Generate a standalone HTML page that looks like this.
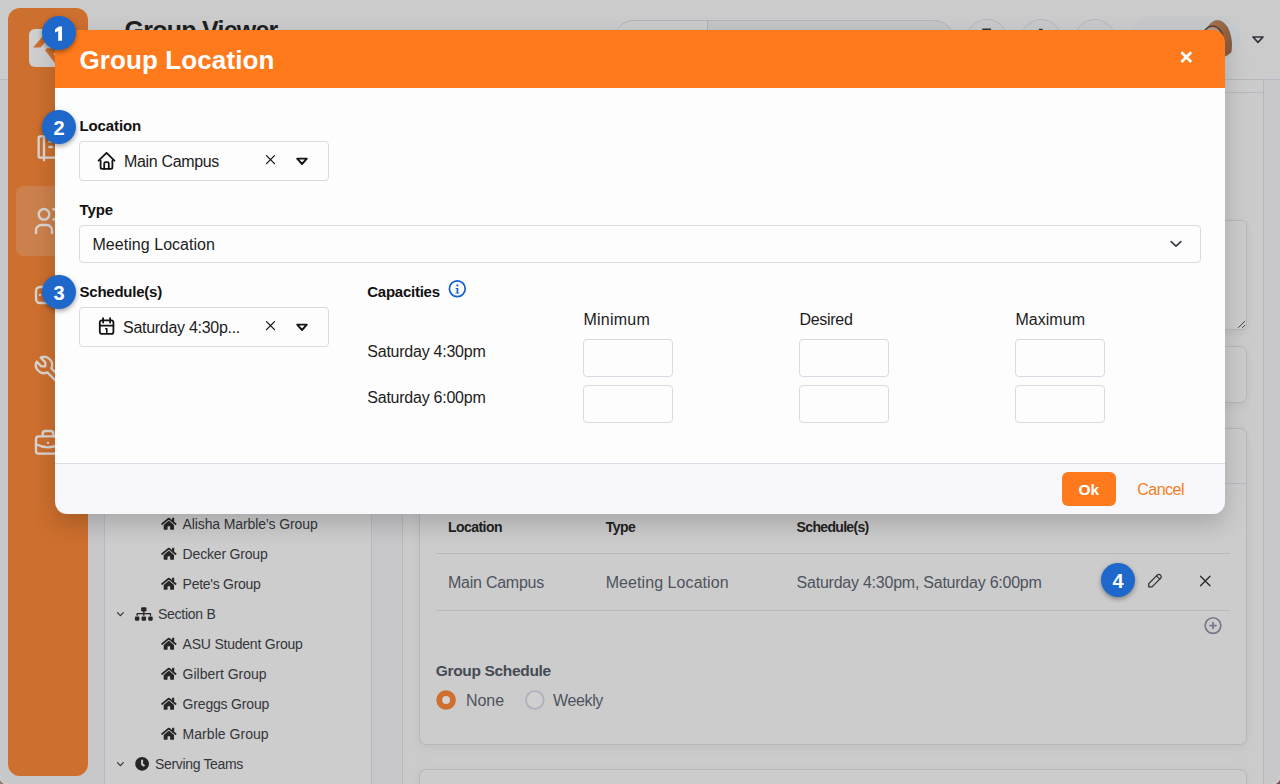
<!DOCTYPE html>
<html lang="en">
<head>
<meta charset="utf-8">
<title>Group Viewer - Group Location</title>
<style>
*{box-sizing:border-box;margin:0;padding:0}
html,body{width:1280px;height:784px;overflow:hidden}
body{position:relative;background:#c8c8cb;font-family:"Liberation Sans",sans-serif;}
.a{position:absolute}
.t{position:absolute;white-space:pre;font-family:"Liberation Sans",sans-serif}
svg{position:absolute;overflow:visible}
/* ---------- dimmed page ---------- */
#topbar{left:0;top:0;width:1280px;height:80px;background:#cbcbcb;border-bottom:1px solid #b7b8c3}
#sidebar{left:8px;top:8px;width:80px;height:768px;border-radius:12px;background:#cd6f2e}
#logo{left:29px;top:29px;width:38px;height:38px;border-radius:6px;background:#cfcfcf}
#active{left:16px;top:186px;width:64px;height:70px;border-radius:7px;background:rgba(200,200,200,.2)}
#search{left:614px;top:20px;width:340px;height:39px;border-radius:20px;border:1px solid #b3b4bf;background:linear-gradient(90deg,#cbcbcb 0 93px,#c5c5c7 93px)}
#searchdiv{left:707px;top:20px;width:1px;height:39px;background:#adaeba}
.cbtn{width:42px;height:42px;border-radius:50%;border:1px solid #b4b5c0;top:19px;background:#c9c9cb}
#pill{left:1131px;top:16px;width:109px;height:45px;border-radius:23px;background:#c6c8cb}
#avatar{left:1198px;top:19px;width:39px;height:39px;border-radius:50%;overflow:hidden;background:#c3cbd0}
#hair{left:4.5px;top:1px;width:29px;height:50px;border-radius:50%;background:linear-gradient(100deg,#a9744f 0%,#9c6a47 50%,#7e553b 100%)}
#face{left:4px;top:7.5px;width:21px;height:30px;border-radius:50%;background:#b8978a;box-shadow:0 0 0 1.6px #5a3c2c}
.panel{background:#cbcbcb;border:1px solid #b6b6bf}
#tree{left:104px;top:100px;width:268px;height:700px;background:#cdcdcd;border:1px solid #b8b9c3}
#main{left:402px;top:79px;width:862px;height:720px}
#hdrline{left:403px;top:92px;width:860px;height:1px;background:#b7b8c2}
.card{background:#cccccc;border:1px solid #b7b7c0;border-radius:7px;box-shadow:0 3px 9px rgba(0,0,0,.055)}
.hl{height:1px;background:#b7b8c2}
/* ---------- modal ---------- */
#modal{left:55px;top:30px;width:1170px;height:484px;border-radius:12px;
 box-shadow:0 10px 25px rgba(0,0,0,.18)}
#mhead{left:0;top:0;width:1170px;height:58px;background:#ff7a1c;border-radius:12px 12px 0 0}
#mbody{left:0;top:58px;width:1170px;height:375px;background:#fdfdfd}
#mfoot{left:0;top:433px;width:1170px;height:51px;background:#f8f8fc;border-top:1px solid #dddde8;border-radius:0 0 12px 12px}
.box{border:1px solid #dadae4;border-radius:4px;background:#fdfdfd}
#ok{left:1062px;top:472px;width:54px;height:34px;border-radius:6px;background:#ff7a1c}
.badge{width:34px;height:34px;border-radius:50%;background:#1e68cb;box-shadow:0 2px 5px rgba(0,0,0,.38);
 color:#fff;font-weight:700;font-size:20px;line-height:36.5px;text-align:center}
</style>
</head>
<body>
<!-- ================= dimmed page ================= -->
<div class="a" id="topbar"></div>
<div class="a" id="search"></div><div class="a" id="searchdiv"></div>
<div class="a cbtn" style="left:966px"></div>
<div class="a cbtn" style="left:1020px"></div>
<div class="a cbtn" style="left:1074px"></div>
<div class="a" id="pill"></div>
<div class="a" id="avatar"><div class="a" id="hair"></div><div class="a" id="face"></div></div>
<svg style="left:1250px;top:33px" width="16" height="12" viewBox="0 0 16 12"><polygon points="3,4 13,4 8,9.3" fill="none" stroke="#30353c" stroke-width="1.7" stroke-linejoin="round"/></svg>

<div class="a" id="sidebar"></div>
<div class="a" id="logo"></div>
<svg style="left:29px;top:29px" width="38" height="38" viewBox="0 0 38 38"><g fill="#cd6f2e"><polygon points="4.1,18.6 11.5,18.6 21.6,6.7 14.2,6.7"/><polygon points="16.1,21.3 17.8,19.2 27,19.2 27,35.5"/></g><polygon points="24.2,24.8 26.2,23.4 26.2,26.8" fill="#cfcfcf"/></svg>
<div class="a" id="active"></div>
<svg style="left:0;top:0" width="1" height="1"><g transform="translate(32.00,131.00) scale(1.3333)" fill="none" stroke="#d9d5d3" stroke-width="1.75" stroke-linecap="round" stroke-linejoin="round"><path d="M6 4h11a2 2 0 0 1 2 2v12a2 2 0 0 1 -2 2h-11a1 1 0 0 1 -1 -1v-14a1 1 0 0 1 1 -1"/><path d="M9 4v18"/><path d="M13 8h2"/><path d="M13 12h2"/></g></svg>
<svg style="left:0;top:0" width="1" height="1"><g transform="translate(32.00,205.00) scale(1.3333)" fill="none" stroke="#d9d5d3" stroke-width="1.75" stroke-linecap="round" stroke-linejoin="round"><path d="M9 7m-4 0a4 4 0 1 0 8 0a4 4 0 1 0 -8 0"/><path d="M3 21v-2a4 4 0 0 1 4 -4h4a4 4 0 0 1 4 4v2"/><path d="M16 3.13a4 4 0 0 1 0 7.75"/><path d="M21 21v-2a4 4 0 0 0 -3 -3.85"/></g></svg>
<svg style="left:0;top:0" width="1" height="1"><g transform="translate(32.00,279.00) scale(1.3333)" fill="none" stroke="#d9d5d3" stroke-width="1.75" stroke-linecap="round" stroke-linejoin="round"><path d="M3 9a3 3 0 0 1 3 -3h12a3 3 0 0 1 3 3v6a3 3 0 0 1 -3 3h-12a3 3 0 0 1 -3 -3z"/><path d="M6 12h.01"/><path d="M18 12h.01"/><path d="M12 12m-3 0a3 3 0 1 0 6 0a3 3 0 1 0 -6 0"/></g></svg>
<svg style="left:0;top:0" width="1" height="1"><g transform="translate(32.00,353.00) scale(1.3333)" fill="none" stroke="#d9d5d3" stroke-width="1.75" stroke-linecap="round" stroke-linejoin="round"><path d="M7 10h3v-3l-3.5 -3.5a6 6 0 0 1 8 8l6 6a2 2 0 0 1 -3 3l-6 -6a6 6 0 0 1 -8 -8l3.500 3.500"/></g></svg>
<svg style="left:0;top:0" width="1" height="1"><g transform="translate(32.00,427.00) scale(1.3333)" fill="none" stroke="#d9d5d3" stroke-width="1.75" stroke-linecap="round" stroke-linejoin="round"><path d="M3 9a2 2 0 0 1 2 -2h14a2 2 0 0 1 2 2v9a2 2 0 0 1 -2 2h-14a2 2 0 0 1 -2 -2z"/><path d="M8 7v-2a2 2 0 0 1 2 -2h4a2 2 0 0 1 2 2v2"/><path d="M12 12v.01"/><path d="M3 13a20 20 0 0 0 18 0"/></g></svg>

<div class="a" id="tree"></div>
<div class="a panel" id="main"></div>
<div class="a" id="hdrline"></div>
<div class="a card" style="left:419px;top:220px;width:828px;height:110px;border-radius:5px"></div>
<div class="a card" style="left:419px;top:346px;width:828px;height:57px"></div>
<div class="a card" style="left:419px;top:428px;width:828px;height:317px"></div>
<div class="a hl" style="left:420px;top:483px;width:826px"></div>
<div class="a card" style="left:419px;top:769px;width:828px;height:60px"></div>
<div class="a hl" style="left:436px;top:553px;width:794px"></div>
<div class="a hl" style="left:436px;top:610px;width:794px"></div>
<svg style="left:0;top:0" width="1" height="1"><path transform="translate(161.10,516.84) scale(0.02691)" d="M280.37 148.26L96 300.11V464a16 16 0 0 0 16 16l112.06-.29a16 16 0 0 0 15.92-16V368a16 16 0 0 1 16-16h64a16 16 0 0 1 16 16v95.64a16 16 0 0 0 16 16.05L464 480a16 16 0 0 0 16-16V300L295.67 148.26a12.19 12.19 0 0 0-15.3 0zM571.6 251.47L488 182.56V44.05a12 12 0 0 0-12-12h-56a12 12 0 0 0-12 12v72.61L318.47 43a48 48 0 0 0-61 0L4.34 251.47a12 12 0 0 0-1.6 16.9l25.5 31A12 12 0 0 0 45.15 301l235.22-193.74a12.19 12.19 0 0 1 15.3 0L530.9 301a12 12 0 0 0 16.9-1.6l25.5-31a12 12 0 0 0-1.7-16.93z" fill="#262626"/></svg>
<svg style="left:0;top:0" width="1" height="1"><path transform="translate(161.10,546.84) scale(0.02691)" d="M280.37 148.26L96 300.11V464a16 16 0 0 0 16 16l112.06-.29a16 16 0 0 0 15.92-16V368a16 16 0 0 1 16-16h64a16 16 0 0 1 16 16v95.64a16 16 0 0 0 16 16.05L464 480a16 16 0 0 0 16-16V300L295.67 148.26a12.19 12.19 0 0 0-15.3 0zM571.6 251.47L488 182.56V44.05a12 12 0 0 0-12-12h-56a12 12 0 0 0-12 12v72.61L318.47 43a48 48 0 0 0-61 0L4.34 251.47a12 12 0 0 0-1.6 16.9l25.5 31A12 12 0 0 0 45.15 301l235.22-193.74a12.19 12.19 0 0 1 15.3 0L530.9 301a12 12 0 0 0 16.9-1.6l25.5-31a12 12 0 0 0-1.7-16.93z" fill="#262626"/></svg>
<svg style="left:0;top:0" width="1" height="1"><path transform="translate(161.10,576.84) scale(0.02691)" d="M280.37 148.26L96 300.11V464a16 16 0 0 0 16 16l112.06-.29a16 16 0 0 0 15.92-16V368a16 16 0 0 1 16-16h64a16 16 0 0 1 16 16v95.64a16 16 0 0 0 16 16.05L464 480a16 16 0 0 0 16-16V300L295.67 148.26a12.19 12.19 0 0 0-15.3 0zM571.6 251.47L488 182.56V44.05a12 12 0 0 0-12-12h-56a12 12 0 0 0-12 12v72.61L318.47 43a48 48 0 0 0-61 0L4.34 251.47a12 12 0 0 0-1.6 16.9l25.5 31A12 12 0 0 0 45.15 301l235.22-193.74a12.19 12.19 0 0 1 15.3 0L530.9 301a12 12 0 0 0 16.9-1.6l25.5-31a12 12 0 0 0-1.7-16.93z" fill="#262626"/></svg>
<svg style="left:0;top:0" width="1" height="1"><path transform="translate(161.10,636.84) scale(0.02691)" d="M280.37 148.26L96 300.11V464a16 16 0 0 0 16 16l112.06-.29a16 16 0 0 0 15.92-16V368a16 16 0 0 1 16-16h64a16 16 0 0 1 16 16v95.64a16 16 0 0 0 16 16.05L464 480a16 16 0 0 0 16-16V300L295.67 148.26a12.19 12.19 0 0 0-15.3 0zM571.6 251.47L488 182.56V44.05a12 12 0 0 0-12-12h-56a12 12 0 0 0-12 12v72.61L318.47 43a48 48 0 0 0-61 0L4.34 251.47a12 12 0 0 0-1.6 16.9l25.5 31A12 12 0 0 0 45.15 301l235.22-193.74a12.19 12.19 0 0 1 15.3 0L530.9 301a12 12 0 0 0 16.9-1.6l25.5-31a12 12 0 0 0-1.7-16.93z" fill="#262626"/></svg>
<svg style="left:0;top:0" width="1" height="1"><path transform="translate(161.10,666.84) scale(0.02691)" d="M280.37 148.26L96 300.11V464a16 16 0 0 0 16 16l112.06-.29a16 16 0 0 0 15.92-16V368a16 16 0 0 1 16-16h64a16 16 0 0 1 16 16v95.64a16 16 0 0 0 16 16.05L464 480a16 16 0 0 0 16-16V300L295.67 148.26a12.19 12.19 0 0 0-15.3 0zM571.6 251.47L488 182.56V44.05a12 12 0 0 0-12-12h-56a12 12 0 0 0-12 12v72.61L318.47 43a48 48 0 0 0-61 0L4.34 251.47a12 12 0 0 0-1.6 16.9l25.5 31A12 12 0 0 0 45.15 301l235.22-193.74a12.19 12.19 0 0 1 15.3 0L530.9 301a12 12 0 0 0 16.9-1.6l25.5-31a12 12 0 0 0-1.7-16.93z" fill="#262626"/></svg>
<svg style="left:0;top:0" width="1" height="1"><path transform="translate(161.10,696.84) scale(0.02691)" d="M280.37 148.26L96 300.11V464a16 16 0 0 0 16 16l112.06-.29a16 16 0 0 0 15.92-16V368a16 16 0 0 1 16-16h64a16 16 0 0 1 16 16v95.64a16 16 0 0 0 16 16.05L464 480a16 16 0 0 0 16-16V300L295.67 148.26a12.19 12.19 0 0 0-15.3 0zM571.6 251.47L488 182.56V44.05a12 12 0 0 0-12-12h-56a12 12 0 0 0-12 12v72.61L318.47 43a48 48 0 0 0-61 0L4.34 251.47a12 12 0 0 0-1.6 16.9l25.5 31A12 12 0 0 0 45.15 301l235.22-193.74a12.19 12.19 0 0 1 15.3 0L530.9 301a12 12 0 0 0 16.9-1.6l25.5-31a12 12 0 0 0-1.7-16.93z" fill="#262626"/></svg>
<svg style="left:0;top:0" width="1" height="1"><path transform="translate(161.10,726.84) scale(0.02691)" d="M280.37 148.26L96 300.11V464a16 16 0 0 0 16 16l112.06-.29a16 16 0 0 0 15.92-16V368a16 16 0 0 1 16-16h64a16 16 0 0 1 16 16v95.64a16 16 0 0 0 16 16.05L464 480a16 16 0 0 0 16-16V300L295.67 148.26a12.19 12.19 0 0 0-15.3 0zM571.6 251.47L488 182.56V44.05a12 12 0 0 0-12-12h-56a12 12 0 0 0-12 12v72.61L318.47 43a48 48 0 0 0-61 0L4.34 251.47a12 12 0 0 0-1.6 16.9l25.5 31A12 12 0 0 0 45.15 301l235.22-193.74a12.19 12.19 0 0 1 15.3 0L530.9 301a12 12 0 0 0 16.9-1.6l25.5-31a12 12 0 0 0-1.7-16.93z" fill="#262626"/></svg>
<svg style="left:0;top:0" width="1" height="1"><path transform="translate(134.9,607.2) scale(0.02781,0.02637)" d="M128 352H32c-17.67 0-32 14.33-32 32v96c0 17.67 14.33 32 32 32h96c17.67 0 32-14.33 32-32v-96c0-17.67-14.33-32-32-32zm-24-80h192v48h48v-48h192v48h48v-57.59c0-21.17-17.23-38.41-38.41-38.41H344v-64h40c17.67 0 32-14.33 32-32V32c0-17.67-14.33-32-32-32H256c-17.67 0-32 14.33-32 32v96c0 17.67 14.33 32 32 32h40v64H94.41C73.23 224 56 241.23 56 262.41V320h48v-48zm264 80h-96c-17.67 0-32 14.33-32 32v96c0 17.67 14.33 32 32 32h96c17.67 0 32-14.33 32-32v-96c0-17.67-14.33-32-32-32zm240 0h-96c-17.67 0-32 14.33-32 32v96c0 17.67 14.33 32 32 32h96c17.67 0 32-14.33 32-32v-96c0-17.67-14.33-32-32-32z" fill="#262626"/></svg>
<svg style="left:0;top:0" width="1" height="1"><path transform="translate(135.03,756.78) scale(0.02762)" d="M256 8C119 8 8 119 8 256s111 248 248 248 248-111 248-248S393 8 256 8zm57.1 350.1L224.9 294c-3.1-2.3-4.9-5.9-4.9-9.7V116c0-6.6 5.4-12 12-12h48c6.6 0 12 5.4 12 12v137.7l63.5 46.2c5.4 3.9 6.5 11.4 2.6 16.8l-28.2 38.8c-3.9 5.3-11.4 6.5-16.8 2.6z" fill="#262626"/></svg>
<svg style="left:0;top:0" width="1" height="1"><polyline points="117.5,612.6 120.4,615.6 123.3,612.6" fill="none" stroke="#333" stroke-width="1.2" stroke-linecap="round" stroke-linejoin="round"/></svg>
<svg style="left:0;top:0" width="1" height="1"><polyline points="117.5,762.6 120.4,765.6 123.3,762.6" fill="none" stroke="#333" stroke-width="1.2" stroke-linecap="round" stroke-linejoin="round"/></svg>
<svg style="left:0;top:0" width="1" height="1"><g transform="translate(1145.51,570.65) scale(0.81)" fill="none" stroke="#303030" stroke-width="1.6" stroke-linecap="round" stroke-linejoin="round"><path d="M4 20h4l10.5 -10.5a2.828 2.828 0 1 0 -4 -4l-10.5 10.5v4"/><path d="M13.5 6.5l4 4"/></g></svg>
<svg style="left:0;top:0" width="1" height="1"><path d="M1200.5 576.3 L1210 585.7 M1210 576.3 L1200.5 585.7" fill="none" stroke="#2a2a2a" stroke-width="1.35" stroke-linecap="round"/></svg>
<svg style="left:0;top:0" width="1" height="1"><g fill="none" stroke="#777889" stroke-width="1.7" stroke-linecap="round"><circle cx="1213" cy="625.6" r="7.85"/><path d="M1210 625.6h6M1213 622.6v6"/></g></svg>
<svg style="left:0;top:0" width="1" height="1"><circle cx="446.1" cy="700" r="6.85" fill="#d4d4d4" stroke="#cf7030" stroke-width="5.9"/><circle cx="534.8" cy="700" r="8.9" fill="#d0d0d1" stroke="#b0b1be" stroke-width="1.9"/></svg>
<svg style="left:0;top:0" width="1" height="1"><path d="M1238.2 327.8 L1245 321 M1242.2 327.8 L1245 325" stroke="#444" stroke-width="1" fill="none"/></svg>
<svg style="left:0;top:0" width="1" height="1"><path d="M982.3 29.4h8.8 M1039 29.6h3.6" stroke="#30343a" stroke-width="1.6" fill="none"/></svg>
<div class="t" style="left:124.60px;top:18.00px;font-size:25px;line-height:25px;font-weight:700;color:#1f1f1f;letter-spacing:-0.758px;">Group Viewer</div>
<div class="t" style="left:182.60px;top:517.00px;font-size:14px;line-height:14px;font-weight:400;color:#33363b;letter-spacing:-0.118px;">Alisha Marble’s Group</div>
<div class="t" style="left:182.60px;top:547.00px;font-size:14px;line-height:14px;font-weight:400;color:#33363b;letter-spacing:-0.180px;">Decker Group</div>
<div class="t" style="left:182.60px;top:577.00px;font-size:14px;line-height:14px;font-weight:400;color:#33363b;letter-spacing:-0.273px;">Pete&#x27;s Group</div>
<div class="t" style="left:158.00px;top:607.00px;font-size:14px;line-height:14px;font-weight:400;color:#33363b;letter-spacing:-0.271px;">Section B</div>
<div class="t" style="left:182.60px;top:637.00px;font-size:14px;line-height:14px;font-weight:400;color:#33363b;letter-spacing:-0.221px;">ASU Student Group</div>
<div class="t" style="left:182.60px;top:667.00px;font-size:14px;line-height:14px;font-weight:400;color:#33363b;letter-spacing:-0.004px;">Gilbert Group</div>
<div class="t" style="left:182.60px;top:697.00px;font-size:14px;line-height:14px;font-weight:400;color:#33363b;letter-spacing:-0.185px;">Greggs Group</div>
<div class="t" style="left:182.60px;top:727.00px;font-size:14px;line-height:14px;font-weight:400;color:#33363b;letter-spacing:0.034px;">Marble Group</div>
<div class="t" style="left:155.00px;top:757.00px;font-size:14px;line-height:14px;font-weight:400;color:#33363b;letter-spacing:-0.334px;">Serving Teams</div>
<div class="t" style="left:448.00px;top:520.00px;font-size:14px;line-height:14px;font-weight:700;color:#222;letter-spacing:-0.543px;">Location</div>
<div class="t" style="left:605.70px;top:520.00px;font-size:14px;line-height:14px;font-weight:700;color:#222;letter-spacing:-0.535px;">Type</div>
<div class="t" style="left:796.60px;top:520.00px;font-size:14px;line-height:14px;font-weight:700;color:#222;letter-spacing:-0.669px;">Schedule(s)</div>
<div class="t" style="left:448.00px;top:575.00px;font-size:16px;line-height:16px;font-weight:400;color:#4e535d;letter-spacing:-0.246px;">Main Campus</div>
<div class="t" style="left:605.70px;top:575.00px;font-size:16px;line-height:16px;font-weight:400;color:#4e535d;letter-spacing:0.071px;">Meeting Location</div>
<div class="t" style="left:796.60px;top:575.00px;font-size:16px;line-height:16px;font-weight:400;color:#4e535d;letter-spacing:-0.237px;">Saturday 4:30pm, Saturday 6:00pm</div>
<div class="t" style="left:435.80px;top:663.00px;font-size:15.5px;line-height:15.5px;font-weight:700;color:#454a55;letter-spacing:-0.337px;">Group Schedule</div>
<div class="t" style="left:466.00px;top:693.00px;font-size:16px;line-height:16px;font-weight:400;color:#4e535d;letter-spacing:-0.062px;">None</div>
<div class="t" style="left:553.00px;top:693.00px;font-size:16px;line-height:16px;font-weight:400;color:#4e535d;letter-spacing:-0.362px;">Weekly</div>

<!-- ================= modal ================= -->
<div class="a" id="modal">
  <div class="a" id="mhead"></div>
  <div class="a" id="mbody"></div>
  <div class="a" id="mfoot"></div>
</div>
<div class="a box" style="left:79px;top:141px;width:250px;height:40px"></div>
<div class="a box" style="left:79px;top:225px;width:1122px;height:38px"></div>
<div class="a box" style="left:79px;top:307px;width:250px;height:40px"></div>
<div class="a box" style="left:583px;top:339px;width:90px;height:38px"></div>
<div class="a box" style="left:799px;top:339px;width:90px;height:38px"></div>
<div class="a box" style="left:1015px;top:339px;width:90px;height:38px"></div>
<div class="a box" style="left:583px;top:385px;width:90px;height:38px"></div>
<div class="a box" style="left:799px;top:385px;width:90px;height:38px"></div>
<div class="a box" style="left:1015px;top:385px;width:90px;height:38px"></div>
<div class="a" id="ok"></div>
<svg style="left:0;top:0" width="1" height="1"><path d="M1181.4 52.2 L1191.2 62 M1191.2 52.2 L1181.4 62" stroke="#fff" stroke-width="2.7" stroke-linecap="butt" fill="none"/></svg>
<svg style="left:97px;top:151px" width="20" height="20" viewBox="0 0 20 20"><g fill="none" stroke="#141414" stroke-width="1.8" stroke-linecap="round" stroke-linejoin="round"><path d="M1.6 9.7 L9.5 1.8 L17.4 9.7"/><path d="M3.6 9.7 V16.2 a1.6 1.6 0 0 0 1.6 1.6 H13.8 a1.6 1.6 0 0 0 1.6 -1.6 V9.7"/><path d="M7.2 17.8 V12.6 a1.5 1.5 0 0 1 1.5 -1.5 H10.3 a1.5 1.5 0 0 1 1.5 1.5 V17.8"/></g></svg>
<svg style="left:97px;top:316px" width="20" height="20" viewBox="0 0 20 20"><g fill="none" stroke="#141414" stroke-width="1.8" stroke-linecap="round" stroke-linejoin="round"><rect x="2.8" y="4.3" width="13.6" height="13.6" rx="2"/><path d="M6.1 2.2v4.4M13.1 2.2v4.4M2.8 9.7h13.6"/><path d="M8.7 12.7h1.1v3.7" stroke-width="1.6"/></g></svg>
<svg style="left:0;top:0" width="1" height="1"><path d="M266.5 155.6 L274.5 163.6 M274.5 155.6 L266.5 163.6" stroke="#141414" stroke-width="1.3" stroke-linecap="round" fill="none"/><polygon points="297.2,158.6 306.8,158.6 302,164" fill="none" stroke="#141414" stroke-width="1.9" stroke-linejoin="round"/></svg>
<svg style="left:0;top:0" width="1" height="1"><path d="M266.5 321.6 L274.5 329.6 M274.5 321.6 L266.5 329.6" stroke="#141414" stroke-width="1.3" stroke-linecap="round" fill="none"/><polygon points="297.2,324.6 306.8,324.6 302,330" fill="none" stroke="#141414" stroke-width="1.9" stroke-linejoin="round"/></svg>
<svg style="left:0;top:0" width="1" height="1"><polyline points="1171.2,241.6 1176,246.2 1180.8,241.6" fill="none" stroke="#343a40" stroke-width="1.6" stroke-linecap="round" stroke-linejoin="round"/></svg>
<svg style="left:0;top:0" width="1" height="1"><circle cx="457.3" cy="288.7" r="7.9" fill="none" stroke="#0d5ed7" stroke-width="1.7"/><circle cx="457.4" cy="285.4" r="1.05" fill="#0d5ed7"/><path d="M455.7 288.1h2.6v4.6h1.1v.9h-3.9v-.9h1.1v-3.7h-.9z" fill="#0d5ed7"/></svg>
<div class="t" style="left:79.50px;top:47.00px;font-size:26px;line-height:26px;font-weight:700;color:#fff;letter-spacing:0.104px;">Group Location</div>
<div class="t" style="left:79.50px;top:118.00px;font-size:15px;line-height:15px;font-weight:700;color:#111;letter-spacing:-0.125px;">Location</div>
<div class="t" style="left:124.00px;top:154.00px;font-size:16px;line-height:16px;font-weight:400;color:#1c1c1c;letter-spacing:-0.337px;">Main Campus</div>
<div class="t" style="left:79.50px;top:202.00px;font-size:15px;line-height:15px;font-weight:700;color:#111;letter-spacing:-0.102px;">Type</div>
<div class="t" style="left:92.50px;top:237.00px;font-size:16px;line-height:16px;font-weight:400;color:#1c1c1c;letter-spacing:0.040px;">Meeting Location</div>
<div class="t" style="left:79.50px;top:284.00px;font-size:15px;line-height:15px;font-weight:700;color:#111;letter-spacing:-0.230px;">Schedule(s)</div>
<div class="t" style="left:123.00px;top:320.00px;font-size:16px;line-height:16px;font-weight:400;color:#1c1c1c;letter-spacing:-0.286px;">Saturday 4:30p...</div>
<div class="t" style="left:367.30px;top:284.00px;font-size:15px;line-height:15px;font-weight:700;color:#111;letter-spacing:-0.255px;">Capacities</div>
<div class="t" style="left:583.50px;top:312.00px;font-size:16px;line-height:16px;font-weight:400;color:#1c1c1c;letter-spacing:0.230px;">Minimum</div>
<div class="t" style="left:799.50px;top:312.00px;font-size:16px;line-height:16px;font-weight:400;color:#1c1c1c;letter-spacing:-0.306px;">Desired</div>
<div class="t" style="left:1015.50px;top:312.00px;font-size:16px;line-height:16px;font-weight:400;color:#1c1c1c;letter-spacing:0.022px;">Maximum</div>
<div class="t" style="left:367.30px;top:344.00px;font-size:16px;line-height:16px;font-weight:400;color:#1c1c1c;letter-spacing:-0.244px;">Saturday 4:30pm</div>
<div class="t" style="left:367.30px;top:390.00px;font-size:16px;line-height:16px;font-weight:400;color:#1c1c1c;letter-spacing:-0.244px;">Saturday 6:00pm</div>
<div class="t" style="left:1078.50px;top:482.00px;font-size:15.5px;line-height:15.5px;font-weight:700;color:#fff;letter-spacing:-0.094px;">Ok</div>
<div class="t" style="left:1137.30px;top:482.00px;font-size:16px;line-height:16px;font-weight:400;color:#f77f22;letter-spacing:-0.519px;">Cancel</div>

<!-- window rounded bottom corners -->
<div class="a" style="left:0;top:776px;width:8px;height:8px;background:radial-gradient(circle at 6.5px 1.5px,rgba(0,0,0,0) 0 5.7px,#d6d6d8 6.3px,#a08670 7.1px,#77726e 9px)"></div>
<div class="a" style="left:1272px;top:776px;width:8px;height:8px;background:radial-gradient(circle at 1.5px 1.5px,rgba(0,0,0,0) 0 5.7px,#d6d6d8 6.3px,#7a5650 7.1px,#6a4742 9px)"></div>
<!-- badges -->
<div class="a badge" style="left:42px;top:16px"></div>
<svg style="left:0;top:0" width="1" height="1"><polygon points="58.9,26.5 62,26.5 62,40.8 58.2,40.8 58.2,30.9 55,32.6 55,29.3" fill="#fff"/></svg>
<div class="a badge" style="left:42px;top:110px">2</div>
<div class="a badge" style="left:42px;top:275px">3</div>
<div class="a badge" style="left:1101px;top:563px">4</div>
</body>
</html>
